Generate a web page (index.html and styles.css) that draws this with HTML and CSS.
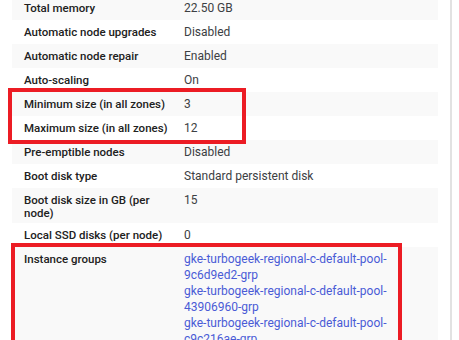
FILE: index.html
```html
<!DOCTYPE html>
<html>
<head>
<meta charset="utf-8">
<link rel="stylesheet" href="styles.css">
</head>
<body>
<div class="panel">
  <div class="details">
    <div class="row alt"><div class="label">Total memory</div><div class="value">22.50 GB</div></div>
    <div class="row"><div class="label">Automatic node upgrades</div><div class="value">Disabled</div></div>
    <div class="row alt"><div class="label">Automatic node repair</div><div class="value">Enabled</div></div>
    <div class="row"><div class="label">Auto-scaling</div><div class="value">On</div></div>
    <div class="row alt"><div class="label">Minimum size (in all zones)</div><div class="value">3</div></div>
    <div class="row"><div class="label">Maximum size (in all zones)</div><div class="value">12</div></div>
    <div class="row alt"><div class="label">Pre-emptible nodes</div><div class="value">Disabled</div></div>
    <div class="row"><div class="label">Boot disk type</div><div class="value">Standard persistent disk</div></div>
    <div class="row alt"><div class="label">Boot disk size in GB (per node)</div><div class="value">15</div></div>
    <div class="row"><div class="label">Local SSD disks (per node)</div><div class="value">0</div></div>
    <div class="row alt tall"><div class="label">Instance groups</div><div class="value">
      <a class="link" href="#">gke-turbogeek-regional-c-default-pool-9c6d9ed2-grp</a>
      <a class="link" href="#">gke-turbogeek-regional-c-default-pool-43906960-grp</a>
      <a class="link" href="#">gke-turbogeek-regional-c-default-pool-c9c216ae-grp</a>
    </div></div>
  </div>
  <div class="mark mark-size"></div>
  <div class="mark mark-groups"></div>
</div>
</body>
</html>
```
FILE: styles.css
```css
html, body {
  margin: 0;
  padding: 0;
  background: #fff;
  overflow: hidden;
}
body {
  font-family: Roboto, "Liberation Sans", Arial, sans-serif;
  font-size: 11.5px;
  color: #202124;
}
.panel {
  position: relative;
  width: 452px;
  height: 340px;
  border-right: 2px solid #e2e2e2;
  box-sizing: border-box;
  overflow: hidden;
}
.details {
  margin-top: -4px;
  margin-left: 12px;
  width: 426px;
}
.row {
  display: grid;
  grid-template-columns: 160px 1fr;
}
.row.alt {
  background: #f9f9f9;
}
.row.tall {
  min-height: 120px;
}
.label {
  padding: 5.5px 4px 3.5px 12px;
  font-weight: 500;
  line-height: 13px;
  color: #212121;
}
.value {
  padding: 4px 12px;
  font-size: 12px;
  line-height: 16px;
  color: #3c4043;
}
.link {
  display: block;
  color: #4a5bd6;
  text-decoration: none;
}
.mark {
  position: absolute;
  border: 4px solid #ec1c24;
  box-sizing: border-box;
}
.mark-size {
  left: 8px;
  top: 88px;
  width: 238px;
  height: 56px;
}
.mark-groups {
  left: 11px;
  top: 243px;
  width: 391px;
  height: 130px;
}
```
